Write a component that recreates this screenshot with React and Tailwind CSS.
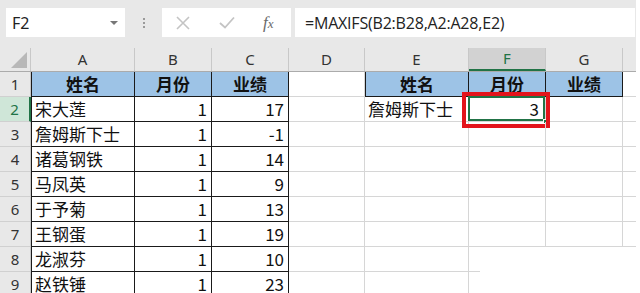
import React from 'react';

const cjk = { fontFamily: '"Noto Sans CJK SC", "Noto Sans", sans-serif' };

const cols = [
  { key: 'A', w: 'w-[104px]' },
  { key: 'B', w: 'w-[77px]' },
  { key: 'C', w: 'w-[77px]' },
  { key: 'D', w: 'w-[76px]' },
  { key: 'E', w: 'w-[104px]' },
  { key: 'F', w: 'w-[77px]' },
  { key: 'G', w: 'w-[77px]' },
  { key: 'H', w: 'w-[13px]' },
];

const data = [
  ['宋大莲', 1, 17],
  ['詹姆斯下士', 1, -1],
  ['诸葛钢铁', 1, 14],
  ['马凤英', 1, 9],
  ['于予菊', 1, 13],
  ['王钢蛋', 1, 19],
  ['龙淑芬', 1, 10],
  ['赵铁锤', 1, 23],
];

function Cell({ w, className = '', children }) {
  return (
    <div className={`${w} h-full shrink-0 flex items-center border-r border-b ${className}`}>
      {children}
    </div>
  );
}

function TopBar() {
  return (
    <div className="h-[48px] bg-[#e8e8e8] flex items-start pt-[8px] pl-[6px]">
      <div className="w-[119px] h-[29px] bg-white flex items-center justify-between pl-[6px] pr-[7px]">
        <span className="text-[16px] text-[#222]" style={{ fontFamily: '"Noto Sans", sans-serif' }}>F2</span>
        <span className="w-0 h-0 border-l-[4px] border-r-[4px] border-t-[4px] border-l-transparent border-r-transparent border-t-[#777]" />
      </div>
      <div className="w-[37px] h-[29px] flex flex-col items-center justify-center gap-[2px]">
        <span className="w-[2px] h-[2px] bg-[#9a9a9a]" />
        <span className="w-[2px] h-[2px] bg-[#9a9a9a]" />
        <span className="w-[2px] h-[2px] bg-[#9a9a9a]" />
      </div>
      <div className="w-[129px] h-[29px] bg-white flex items-center">
        <svg width="14" height="14" viewBox="0 0 14 14" className="ml-[14px]">
          <path d="M1 1 L13 13 M13 1 L1 13" stroke="#c4c4c4" strokeWidth="1.6" fill="none" />
        </svg>
        <svg width="16" height="13" viewBox="0 0 16 13" className="ml-[29px]">
          <path d="M1 7 L6 11.5 L15 1.5" stroke="#c4c4c4" strokeWidth="1.8" fill="none" />
        </svg>
        <span className="ml-[28px] text-[17px] italic text-[#6a6a6a]" style={{ fontFamily: '"Liberation Serif", serif' }}>
          f<span className="text-[13px]">x</span>
        </span>
      </div>
      <div className="ml-[4px] w-[340px] h-[29px] bg-white flex items-center pl-[10px]">
        <span className="text-[16px] text-[#222] tracking-[-0.2px]" style={{ fontFamily: '"Open Sans", sans-serif' }}>
          =MAXIFS(B2:B28,A2:A28,E2)
        </span>
      </div>
    </div>
  );
}

function ColHeader() {
  return (
    <div className="h-[24px] flex bg-[#e8e8e8] border-b border-[#ababab]">
      <div className="w-[31px] h-full shrink-0 flex items-end justify-end pr-[3px] pb-[3px] border-r border-[#c8c8c8]">
        <svg width="16" height="16" viewBox="0 0 16 16">
          <path d="M16 0 L16 16 L0 16 Z" fill="#b8b8b8" />
        </svg>
      </div>
      {cols.map(c => (
        <div
          key={c.key}
          className={`${c.w} h-full shrink-0 flex items-center justify-center text-[15px] ${c.key === 'H' ? '' : 'border-r border-[#c8c8c8]'} ${c.key === 'F' ? 'bg-[#d2d2d2] text-[#217346] border-b-2 border-b-[#217346]' : 'text-[#333]'}`}
          style={{ fontFamily: '"Noto Sans", sans-serif' }}
        >
          {c.key === 'H' ? '' : c.key}
        </div>
      ))}
    </div>
  );
}

function RowHead({ n }) {
  const sel = n === 2;
  return (
    <div
      className={`w-[31px] h-full shrink-0 flex items-center justify-center text-[15px] border-b border-[#d0d0d0] ${sel ? 'bg-[#cfe6d8] text-[#217346] border-r-2 border-r-[#217346]' : 'bg-[#e8e8e8] text-[#333] border-r border-r-[#c8c8c8]'}`}
      style={{ fontFamily: '"Noto Sans", sans-serif' }}
    >
      {n}
    </div>
  );
}

const grid = 'border-[#d6d6d6]';
const blk = 'border-[#1a1a1a]';

function HeaderRow() {
  const h = 'bg-[#9dc3e6] justify-center font-bold text-[17px] text-[#111]';
  return (
    <div className="h-[25px] flex" style={cjk}>
      <RowHead n={1} />
      <Cell w="w-[104px]" className={`${h} ${blk} border-l`}>姓名</Cell>
      <Cell w="w-[77px]" className={`${h} ${blk}`}>月份</Cell>
      <Cell w="w-[77px]" className={`${h} ${blk}`}>业绩</Cell>
      <Cell w="w-[76px]" className={grid} />
      <Cell w="w-[104px]" className={`${h} ${blk} border-l`}>姓名</Cell>
      <Cell w="w-[77px]" className={`${h} ${blk}`}>月份</Cell>
      <Cell w="w-[77px]" className={`${h} ${blk}`}>业绩</Cell>
      <div className="w-[13px] h-full border-b border-[#d6d6d6]" />
    </div>
  );
}

function DataRow({ n, row }) {
  const t = 'text-[17px] text-[#111]';
  const noGrid = n >= 8;
  return (
    <div className="h-[25px] flex" style={cjk}>
      <RowHead n={n} />
      <Cell w="w-[104px]" className={`${t} ${blk} border-l pl-[3px]`}>{row[0]}</Cell>
      <Cell w="w-[77px]" className={`${t} ${blk} justify-end pr-[4px]`}>{row[1]}</Cell>
      <Cell w="w-[77px]" className={`${t} ${blk} justify-end pr-[4px]`}>{row[2]}</Cell>
      <Cell w="w-[76px]" className={grid} />
      <Cell w="w-[104px]" className={`${t} ${grid} pl-[3px]`}>{n === 2 ? '詹姆斯下士' : ''}</Cell>
      {noGrid ? (
        <div className="w-[167px] h-full flex">
          <div className={`w-[11px] h-full ${n === 8 ? 'border-b border-[#d6d6d6]' : ''}`} />
        </div>
      ) : (
        <>
          <Cell w="w-[77px]" className={`${t} ${grid} justify-end pr-[6px] relative`}>
            {n === 2 && (
              <>
                <div className="absolute -left-[1px] -top-[1px] right-0 bottom-0 border-2 border-[#217346]" />
                <div className="absolute -right-[3px] -bottom-[3px] w-[5px] h-[5px] bg-[#217346] border border-white" />
                <div className="absolute -left-[7px] -top-[5px] -right-[5px] -bottom-[7px] border-[4px] border-[#e3141c]" />
                <span className="relative">3</span>
              </>
            )}
          </Cell>
          <Cell w="w-[77px]" className={grid} />
          <div className="w-[13px] h-full border-b border-[#d6d6d6]" />
        </>
      )}
    </div>
  );
}

export default function App() {
  return (
    <div className="w-[640px] h-[293px] overflow-hidden bg-white">
      <div className="w-[636px]">
        <TopBar />
        <ColHeader />
        <HeaderRow />
        {data.map((row, i) => (
          <DataRow key={i} n={i + 2} row={row} />
        ))}
      </div>
    </div>
  );
}
